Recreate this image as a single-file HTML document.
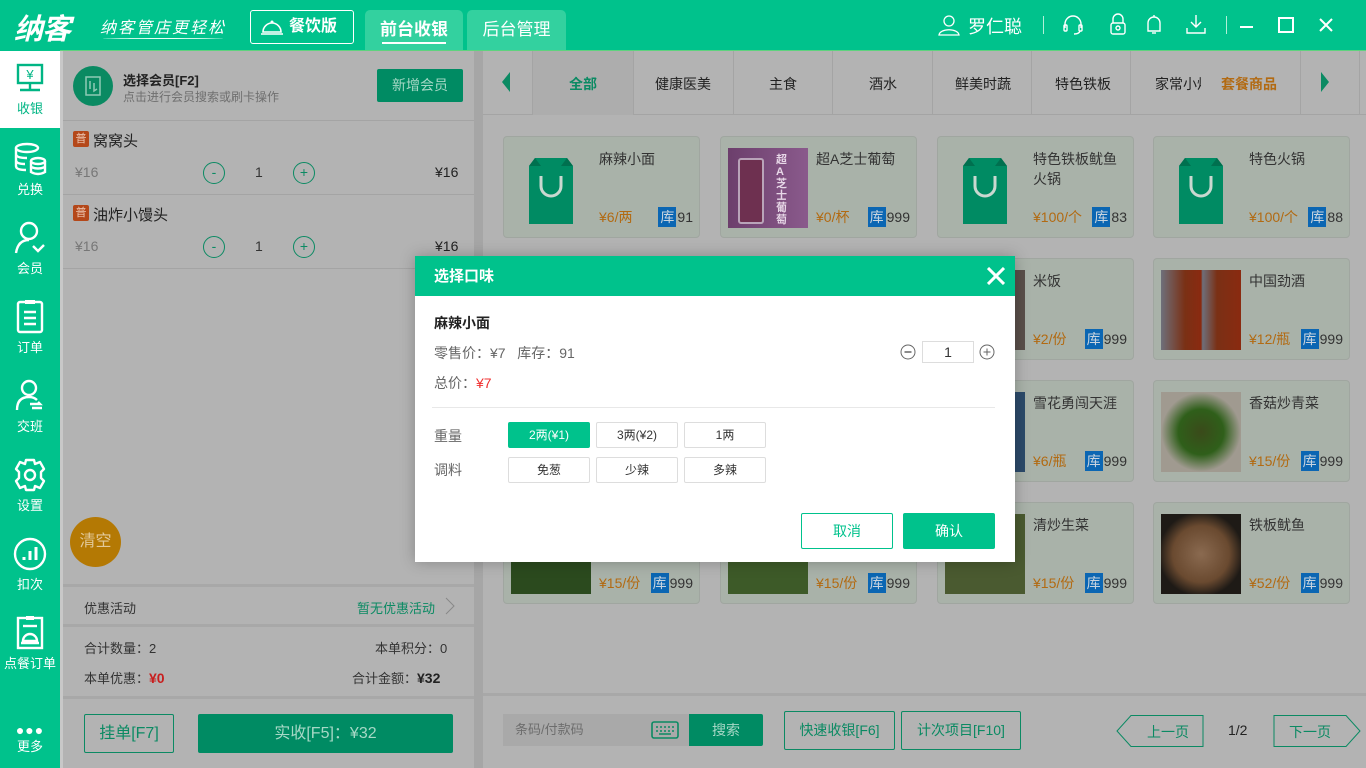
<!DOCTYPE html>
<html><head><meta charset="utf-8">
<style>
*{margin:0;padding:0;box-sizing:border-box}
body{width:1366px;height:768px;overflow:hidden;position:relative;background:#b3b3b3;font-family:"Liberation Sans","Noto Sans CJK SC",sans-serif;font-size:14px;color:#333}
.a{position:absolute}
.hdr{left:0;top:0;width:1366px;height:50px;background:#00c28c}
.side{left:0;top:50px;width:60px;height:718px;background:#00c28c}
.si{position:absolute;left:0;width:60px;text-align:center;color:#fff;font-size:13px}
.si svg{display:block;margin:0 auto 2px}
.card{position:absolute;width:197px;height:102px;background:#a9b2a9;border:1px solid #a0a6a0;border-radius:4px}
.card .im{position:absolute;left:7px;top:11px;width:80px;height:80px}
.card .nm{position:absolute;left:95px;top:12px;font-size:14px;color:#333;line-height:20px;width:96px}
.card .pr{position:absolute;left:95px;bottom:10px;color:#b26a12;font-size:14px}
.card .st{position:absolute;right:6px;bottom:10px;font-size:14px;color:#333}
.card .st b{display:inline-block;background:#0b66b3;color:#c9d4df;font-weight:normal;padding:0 2px;margin-right:1px;height:20px;line-height:20px}
.gbtn{position:absolute;border:1px solid #0b8a63;color:#0b8a63;border-radius:2px;text-align:center}
.opt{position:absolute;width:82px;height:26px;border:1px solid #ddd;border-radius:2px;text-align:center;line-height:24px;font-size:12px;color:#333;background:#fff}
</style></head><body>

<!-- header -->
<div class="a hdr"></div>
<div class="a" style="left:14px;top:6px;color:#fff;font-size:29px;font-weight:bold;font-style:italic;letter-spacing:-1px">纳客</div>
<div class="a" style="left:100px;top:14px;color:#fff;font-size:16px;font-style:italic;letter-spacing:2px">纳客管店更轻松</div>
<div class="a" style="left:103px;top:38px;width:120px;height:2px;border-top:1px solid #e8fff5;border-radius:50%"></div>
<div class="a" style="left:250px;top:10px;width:104px;height:34px;border:1px solid #fff;border-radius:3px;color:#fff;font-size:16px;font-weight:bold;line-height:32px;padding-left:38px">餐饮版</div>
<svg class="a" style="left:259px;top:17px" width="26" height="20" viewBox="0 0 26 20"><path d="M4 15 A9 9 0 0 1 22 15 Z" fill="none" stroke="#fff" stroke-width="1.6"/><line x1="2" y1="17" x2="24" y2="17" stroke="#fff" stroke-width="1.6"/><circle cx="13" cy="5" r="1.5" fill="#fff"/></svg>
<div class="a" style="left:365px;top:10px;width:98px;height:40px;background:#33d19f;border-radius:5px 5px 0 0;color:#fff;font-size:17px;font-weight:bold;text-align:center;line-height:40px">前台收银</div>
<div class="a" style="left:382px;top:42px;width:64px;height:2px;background:#fff"></div>
<div class="a" style="left:467px;top:10px;width:99px;height:40px;background:#33d19f;border-radius:5px 5px 0 0;color:#fff;font-size:17px;text-align:center;line-height:40px">后台管理</div>
<svg class="a" style="left:938px;top:14px" width="22" height="22" viewBox="0 0 22 22" fill="none" stroke="#fff" stroke-width="1.3"><circle cx="11" cy="7" r="5"/><path d="M1 21 C2 14 20 14 21 21 Z"/></svg>
<div class="a" style="left:968px;top:13px;color:#fff;font-size:18px">罗仁聪</div>
<div class="a" style="left:1043px;top:16px;width:1px;height:18px;background:#b0f0d8"></div>
<svg class="a" style="left:1062px;top:14px" width="22" height="22" viewBox="0 0 22 22" fill="none" stroke="#fff" stroke-width="1.4"><path d="M3 14 V10 A8 8 0 0 1 19 10 V14"/><rect x="2" y="11" width="3" height="6" rx="1"/><rect x="17" y="11" width="3" height="6" rx="1"/><path d="M18 17 Q17 20 12 20"/></svg>
<svg class="a" style="left:1109px;top:13px" width="18" height="22" viewBox="0 0 18 22" fill="none" stroke="#fff" stroke-width="1.4"><path d="M4 10 V6 A5 5 0 0 1 14 6 V10"/><rect x="2" y="10" width="14" height="11" rx="2"/><circle cx="9" cy="15" r="2"/></svg>
<svg class="a" style="left:1145px;top:13px" width="18" height="23" viewBox="0 0 18 23" fill="none" stroke="#fff" stroke-width="1.4"><path d="M3 18 V10 A6 6 0 0 1 15 10 V18 Z"/><line x1="9" y1="2" x2="9" y2="4"/><path d="M7 20 h4"/></svg>
<svg class="a" style="left:1185px;top:13px" width="22" height="22" viewBox="0 0 22 22" fill="none" stroke="#fff" stroke-width="1.4"><path d="M11 2 V14 M6 9 L11 14 L16 9"/><path d="M2 15 V20 H20 V15"/></svg>
<div class="a" style="left:1226px;top:16px;width:1px;height:18px;background:#b0f0d8"></div>
<div class="a" style="left:1240px;top:26px;width:13px;height:2px;background:#fff"></div>
<div class="a" style="left:1278px;top:17px;width:16px;height:16px;border:2px solid #fff"></div>
<svg class="a" style="left:1319px;top:18px" width="14" height="14" viewBox="0 0 14 14" stroke="#fff" stroke-width="2"><path d="M1 1 L13 13 M13 1 L1 13"/></svg>
<div class="a" style="left:0;top:50px;width:1366px;height:1px;background:#5fd37e"></div>

<!-- sidebar -->
<div class="a side"></div>
<div class="a" style="left:0;top:51px;width:60px;height:77px;background:#fff"></div>
<div class="si" style="top:62px;color:#00b584"><svg width="36" height="34" viewBox="0 0 36 34" fill="none" stroke="#00b584" stroke-width="2.4"><rect x="6" y="3" width="24" height="18"/><path d="M18 21 V28 M8 28 H28"/><text x="18" y="17" font-size="13" fill="#00b584" stroke="none" text-anchor="middle" font-family="Liberation Sans">¥</text></svg>收银</div>
<div class="si" style="top:141px"><svg width="36" height="36" viewBox="0 0 36 36" fill="none" stroke="#fff" stroke-width="2.4"><ellipse cx="15" cy="7" rx="11" ry="4"/><path d="M4 7 V25 Q4 29 14 29 M4 13 Q4 17 15 17 M4 19 Q4 23 13 23"/><ellipse cx="26" cy="20" rx="7" ry="3"/><path d="M19 20 V31 Q26 35 33 31 V20 M19 26 Q26 29 33 26"/></svg>兑换</div>
<div class="si" style="top:220px"><svg width="36" height="36" viewBox="0 0 36 36" fill="none" stroke="#fff" stroke-width="2.4"><circle cx="17" cy="11" r="8"/><path d="M4 33 Q6 20 17 20"/><path d="M21 26 L26 31 L32 25"/></svg>会员</div>
<div class="si" style="top:299px"><svg width="36" height="36" viewBox="0 0 36 36" fill="none" stroke="#fff" stroke-width="2.4"><rect x="6" y="3" width="24" height="30" rx="2"/><path d="M13 3 H23" stroke-width="4"/><path d="M12 13 H24 M12 19 H24 M12 25 H24"/></svg>订单</div>
<div class="si" style="top:378px"><svg width="36" height="36" viewBox="0 0 36 36" fill="none" stroke="#fff" stroke-width="2.4"><circle cx="17" cy="10" r="7"/><path d="M5 32 Q5 19 17 19 Q22 19 25 22"/><path d="M18 26 H28 L26 24 M20 30 H30"/></svg>交班</div>
<div class="si" style="top:457px"><svg width="36" height="36" viewBox="0 0 36 36" fill="none" stroke="#fff" stroke-width="2.4"><path d="M14 3 H22 L23 7 L28 5 L32 12 L29 15 V21 L32 24 L28 31 L23 29 L22 33 H14 L13 29 L8 31 L4 24 L7 21 V15 L4 12 L8 5 L13 7 Z" stroke-linejoin="round"/><circle cx="18" cy="18" r="5"/></svg>设置</div>
<div class="si" style="top:536px"><svg width="36" height="36" viewBox="0 0 36 36" fill="none" stroke="#fff" stroke-width="2.4"><circle cx="18" cy="18" r="15"/><path d="M12 24 V21 M18 24 V15 M24 24 V11" stroke-width="3"/></svg>扣次</div>
<div class="si" style="top:615px"><svg width="36" height="36" viewBox="0 0 36 36" fill="none" stroke="#fff" stroke-width="2.4"><rect x="6" y="3" width="24" height="30"/><path d="M14 3 H22" stroke-width="4"/><path d="M11 11 H25"/><path d="M11 26 A7 7 0 0 1 25 26 Z M9 28 H27"/></svg><span style="margin-left:-4px;margin-right:-4px">点餐订单</span></div>
<div class="si" style="top:724px"><div style="font-size:14px;letter-spacing:1px;line-height:12px;font-weight:bold">●●●</div>更多</div>
<div class="a" style="left:60px;top:51px;width:3px;height:717px;background:#c8c8c8"></div>

<!-- left panel -->
<div class="a" style="left:63px;top:51px;width:411px;height:717px;background:#b3b3b3"></div>
<div class="a" style="left:73px;top:66px;width:40px;height:40px;border-radius:50%;background:#0a8a62"></div>
<svg class="a" style="left:84px;top:75px" width="18" height="22" viewBox="0 0 18 22" fill="none" stroke="#8fc9b4" stroke-width="1.5"><rect x="2" y="2" width="14" height="18"/><path d="M6 6 V14 M10 8 V16 L13 14"/></svg>
<div class="a" style="left:123px;top:70px;font-size:13px;font-weight:bold;color:#222">选择会员[F2]</div>
<div class="a" style="left:123px;top:88px;font-size:12px;color:#6f6f6f">点击进行会员搜索或刷卡操作</div>
<div class="a" style="left:377px;top:69px;width:86px;height:33px;background:#008b63;border-radius:2px;color:#a6d8c6;text-align:center;line-height:33px;font-size:14px">新增会员</div>
<div class="a" style="left:63px;top:120px;width:411px;height:1px;background:#a4a4a4"></div>

<div class="a" style="left:73px;top:131px;width:16px;height:16px;background:#b4481a;color:#eec9b5;font-size:11px;text-align:center;line-height:16px;border-radius:2px">普</div>
<div class="a" style="left:93px;top:130px;font-size:15px;color:#222">窝窝头</div>
<div class="a" style="left:75px;top:164px;font-size:14px;color:#777">¥16</div>
<div class="a" style="left:203px;top:162px;width:22px;height:22px;border:1px solid #0b8a63;border-radius:50%;text-align:center;line-height:19px;color:#0b8a63">-</div>
<div class="a" style="left:255px;top:164px;color:#333">1</div>
<div class="a" style="left:293px;top:162px;width:22px;height:22px;border:1px solid #0b8a63;border-radius:50%;text-align:center;line-height:19px;color:#0b8a63">+</div>
<div class="a" style="left:435px;top:164px;color:#222">¥16</div>
<div class="a" style="left:63px;top:194px;width:411px;height:1px;background:#a4a4a4"></div>
<div class="a" style="left:73px;top:205px;width:16px;height:16px;background:#b4481a;color:#eec9b5;font-size:11px;text-align:center;line-height:16px;border-radius:2px">普</div>
<div class="a" style="left:93px;top:204px;font-size:15px;color:#222">油炸小馒头</div>
<div class="a" style="left:75px;top:238px;font-size:14px;color:#777">¥16</div>
<div class="a" style="left:203px;top:236px;width:22px;height:22px;border:1px solid #0b8a63;border-radius:50%;text-align:center;line-height:19px;color:#0b8a63">-</div>
<div class="a" style="left:255px;top:238px;color:#333">1</div>
<div class="a" style="left:293px;top:236px;width:22px;height:22px;border:1px solid #0b8a63;border-radius:50%;text-align:center;line-height:19px;color:#0b8a63">+</div>
<div class="a" style="left:435px;top:238px;color:#222">¥16</div>
<div class="a" style="left:63px;top:268px;width:411px;height:1px;background:#a4a4a4"></div>

<div class="a" style="left:70px;top:517px;width:51px;height:50px;border-radius:50%;background:#b47904;color:#e2c99a;font-size:16px;text-align:center;line-height:50px">清空</div>
<div class="a" style="left:63px;top:584px;width:411px;height:3px;background:#a8a8a8"></div>
<div class="a" style="left:84px;top:598px;font-size:13px;color:#333">优惠活动</div>
<div class="a" style="left:357px;top:598px;font-size:13px;color:#0b8a63">暂无优惠活动</div>
<svg class="a" style="left:444px;top:597px" width="12" height="18" viewBox="0 0 12 18" fill="none" stroke="#888" stroke-width="1"><path d="M2 1 L10 9 L2 17"/></svg>
<div class="a" style="left:63px;top:624px;width:411px;height:3px;background:#a8a8a8"></div>
<div class="a" style="left:84px;top:638px;font-size:13px;color:#333">合计数量：2</div>
<div class="a" style="left:375px;top:638px;font-size:13px;color:#333">本单积分：0</div>
<div class="a" style="left:84px;top:668px;font-size:13px;color:#333">本单优惠：<b style="color:#c81e1e;font-size:14px">¥0</b></div>
<div class="a" style="left:352px;top:668px;font-size:13px;color:#333">合计金额：<b style="color:#222;font-size:14px">¥32</b></div>
<div class="a" style="left:63px;top:696px;width:411px;height:3px;background:#a8a8a8"></div>
<div class="gbtn" style="left:84px;top:714px;width:90px;height:39px;line-height:37px;font-size:16px">挂单[F7]</div>
<div class="a" style="left:198px;top:714px;width:255px;height:39px;background:#008b63;border-radius:2px;color:#a6d8c6;text-align:center;line-height:39px;font-size:16px">实收[F5]：¥32</div>

<div class="a" style="left:474px;top:51px;width:9px;height:717px;background:#a6a6a6"></div>

<!-- right panel -->
<div class="a" style="left:483px;top:51px;width:883px;height:64px;background:#b3b3b3;border-bottom:1px solid #a4a4a4"></div>
<svg class="a" style="left:500px;top:72px" width="12" height="20" viewBox="0 0 12 20"><path d="M10 0 L2 10 L10 20 Z" fill="#0b8a63"/></svg>
<div class="a" style="left:532px;top:51px;width:1px;height:64px;background:#a4a4a4"></div>
<div class="a" style="left:533px;top:51px;width:100px;height:64px;background:#adadad"></div>
<div class="a" style="left:569px;top:74px;font-size:14px;font-weight:bold;color:#0b8a63">全部</div>
<div class="a" style="left:633px;top:51px;width:1px;height:64px;background:#a4a4a4"></div>
<div class="a" style="left:655px;top:74px;font-size:14px;color:#222">健康医美</div>
<div class="a" style="left:733px;top:51px;width:1px;height:64px;background:#a4a4a4"></div>
<div class="a" style="left:769px;top:74px;font-size:14px;color:#222">主食</div>
<div class="a" style="left:832px;top:51px;width:1px;height:64px;background:#a4a4a4"></div>
<div class="a" style="left:869px;top:74px;font-size:14px;color:#222">酒水</div>
<div class="a" style="left:932px;top:51px;width:1px;height:64px;background:#a4a4a4"></div>
<div class="a" style="left:955px;top:74px;font-size:14px;color:#222">鲜美时蔬</div>
<div class="a" style="left:1031px;top:51px;width:1px;height:64px;background:#a4a4a4"></div>
<div class="a" style="left:1055px;top:74px;font-size:14px;color:#222">特色铁板</div>
<div class="a" style="left:1130px;top:51px;width:1px;height:64px;background:#a4a4a4"></div>
<div class="a" style="left:1155px;top:74px;font-size:14px;color:#222;width:46px;overflow:hidden;white-space:nowrap">家常小炒</div>
<div class="a" style="left:1221px;top:74px;font-size:14px;font-weight:bold;color:#b26a12">套餐商品</div>
<div class="a" style="left:1300px;top:51px;width:1px;height:64px;background:#a4a4a4"></div>
<svg class="a" style="left:1319px;top:72px" width="12" height="20" viewBox="0 0 12 20"><path d="M2 0 L10 10 L2 20 Z" fill="#0b8a63"/></svg>
<div class="a" style="left:1359px;top:51px;width:1px;height:64px;background:#a4a4a4"></div>

<!-- cards -->
<svg width="0" height="0" style="position:absolute"><defs><g id="bag"><path d="M10 12 L16 4 H48 L54 12 V70 H10 Z" fill="#008b63"/><path d="M16 4 L22 12 H10 Z M48 4 L42 12 H54 Z" fill="#00704f"/><path d="M22 22 V32 A10 10 0 0 0 42 32 V22" fill="none" stroke="#c9d8d0" stroke-width="3"/></g></defs></svg>

<div class="card" style="left:503px;top:136px"><svg class="im" viewBox="0 0 80 80"><use href="#bag" x="8" y="6"/></svg><div class="nm">麻辣小面</div><div class="pr">¥6/两</div><div class="st"><b>库</b>91</div></div>
<div class="card" style="left:720px;top:136px"><div class="im" style="background:linear-gradient(90deg,#6c3f6c,#8a5a8c)"><div style="position:absolute;left:10px;top:10px;width:26px;height:66px;background:#6e3050;border-radius:3px;border:2px solid #b9a4b9"></div><div style="position:absolute;left:48px;top:6px;color:#e7d7e7;font-size:11px;font-weight:bold;width:14px;line-height:12px">超A芝士葡萄</div></div><div class="nm">超A芝士葡萄</div><div class="pr">¥0/杯</div><div class="st"><b>库</b>999</div></div>
<div class="card" style="left:937px;top:136px"><svg class="im" viewBox="0 0 80 80"><use href="#bag" x="8" y="6"/></svg><div class="nm">特色铁板鱿鱼火锅</div><div class="pr">¥100/个</div><div class="st"><b>库</b>83</div></div>
<div class="card" style="left:1153px;top:136px"><svg class="im" viewBox="0 0 80 80"><use href="#bag" x="8" y="6"/></svg><div class="nm">特色火锅</div><div class="pr">¥100/个</div><div class="st"><b>库</b>88</div></div>

<div class="card" style="left:503px;top:258px"></div>
<div class="card" style="left:720px;top:258px"></div>
<div class="card" style="left:937px;top:258px"><div class="im" style="background:#5a4f4a"></div><div class="nm">米饭</div><div class="pr">¥2/份</div><div class="st"><b>库</b>999</div></div>
<div class="card" style="left:1153px;top:258px"><div class="im" style="background:linear-gradient(90deg,#6e6f7a,#7a3015 30%,#8a2a10 50%,#6e6f7a 52%,#7a3015 70%,#8a2a10)"></div><div class="nm">中国劲酒</div><div class="pr">¥12/瓶</div><div class="st"><b>库</b>999</div></div>

<div class="card" style="left:503px;top:380px"></div>
<div class="card" style="left:720px;top:380px"></div>
<div class="card" style="left:937px;top:380px"><div class="im" style="background:#2c4a6a"></div><div class="nm">雪花勇闯天涯</div><div class="pr">¥6/瓶</div><div class="st"><b>库</b>999</div></div>
<div class="card" style="left:1153px;top:380px"><div class="im" style="background:radial-gradient(circle,#3a4a1a 0,#2f5f1a 40%,#a09a90 70%)"></div><div class="nm">香菇炒青菜</div><div class="pr">¥15/份</div><div class="st"><b>库</b>999</div></div>

<div class="card" style="left:503px;top:502px"><div class="im" style="background:#2b4a1e"></div><div class="pr">¥15/份</div><div class="st"><b>库</b>999</div></div>
<div class="card" style="left:720px;top:502px"><div class="im" style="background:#3d5a28"></div><div class="pr">¥15/份</div><div class="st"><b>库</b>999</div></div>
<div class="card" style="left:937px;top:502px"><div class="im" style="background:#4a5a30"></div><div class="nm">清炒生菜</div><div class="pr">¥15/份</div><div class="st"><b>库</b>999</div></div>
<div class="card" style="left:1153px;top:502px"><div class="im" style="background:radial-gradient(circle,#8a6a50 0,#6a4a30 50%,#1e1a16 75%)"></div><div class="nm">铁板鱿鱼</div><div class="pr">¥52/份</div><div class="st"><b>库</b>999</div></div>

<!-- bottom bar -->
<div class="a" style="left:483px;top:693px;width:883px;height:3px;background:#a8a8a8"></div>
<div class="a" style="left:503px;top:714px;width:186px;height:32px;background:#a9a9a9;padding-left:12px;line-height:32px;font-size:13px;color:#6d6d6d">条码/付款码</div>
<svg class="a" style="left:651px;top:721px" width="28" height="18" viewBox="0 0 28 18" fill="none" stroke="#0b8a63" stroke-width="1.6"><rect x="1" y="1" width="26" height="16" rx="2"/><path d="M5 6 h2 M9 6 h2 M13 6 h2 M17 6 h2 M21 6 h2 M5 10 h2 M9 10 h2 M13 10 h2 M17 10 h2 M21 10 h2 M8 13 h12"/></svg>
<div class="a" style="left:689px;top:714px;width:74px;height:32px;background:#008b63;color:#a6d8c6;text-align:center;line-height:32px;font-size:14px;border-radius:0 2px 2px 0">搜索</div>
<div class="gbtn" style="left:784px;top:711px;width:111px;height:39px;line-height:37px;font-size:14px">快速收银[F6]</div>
<div class="gbtn" style="left:901px;top:711px;width:120px;height:39px;line-height:37px;font-size:14px">计次项目[F10]</div>
<svg class="a" style="left:1116px;top:715px" width="89" height="32" viewBox="0 0 89 32" fill="none" stroke="#0b8a63" stroke-width="1"><path d="M15 0.5 H87 V31.5 H15 L1 16 Z"/></svg>
<div class="a" style="left:1147px;top:722px;color:#0b8a63;font-size:14px">上一页</div>
<div class="a" style="left:1228px;top:722px;color:#222;font-size:14px">1/2</div>
<svg class="a" style="left:1273px;top:715px" width="89" height="32" viewBox="0 0 89 32" fill="none" stroke="#0b8a63" stroke-width="1"><path d="M1 0.5 H73 L87 16 L73 31.5 H1 Z"/></svg>
<div class="a" style="left:1289px;top:722px;color:#0b8a63;font-size:14px">下一页</div>

<!-- dialog -->
<div class="a" style="left:415px;top:256px;width:600px;height:306px;background:#fff;box-shadow:0 0 14px rgba(0,0,0,.25)"></div>
<div class="a" style="left:415px;top:256px;width:600px;height:40px;background:#00c28c"></div>
<div class="a" style="left:434px;top:265px;color:#fff;font-size:15px;font-weight:bold">选择口味</div>
<svg class="a" style="left:987px;top:267px" width="18" height="18" viewBox="0 0 18 18" stroke="#fff" stroke-width="3"><path d="M1 1 L17 17 M17 1 L1 17"/></svg>
<div class="a" style="left:434px;top:313px;font-size:14px;font-weight:bold;color:#222">麻辣小面</div>
<div class="a" style="left:434px;top:343px;font-size:14px;color:#666">零售价：¥7&nbsp;&nbsp;&nbsp;库存：91</div>
<div class="a" style="left:434px;top:373px;font-size:14px;color:#666">总价：<span style="color:#f03030">¥7</span></div>
<svg class="a" style="left:900px;top:344px" width="16" height="16" viewBox="0 0 16 16" fill="none" stroke="#666" stroke-width="1"><circle cx="8" cy="8" r="7"/><path d="M4.5 8 H11.5" stroke-width="1.5"/></svg>
<div class="a" style="left:922px;top:341px;width:52px;height:22px;border:1px solid #ddd;text-align:center;line-height:20px;font-size:14px;color:#333">1</div>
<svg class="a" style="left:979px;top:344px" width="16" height="16" viewBox="0 0 16 16" fill="none" stroke="#666" stroke-width="1"><circle cx="8" cy="8" r="7"/><path d="M4.5 8 H11.5 M8 4.5 V11.5"/></svg>
<div class="a" style="left:432px;top:407px;width:563px;height:1px;background:#e8e8e8"></div>
<div class="a" style="left:434px;top:426px;font-size:14px;color:#666">重量</div>
<div class="a" style="left:434px;top:460px;font-size:14px;color:#666">调料</div>
<div class="opt" style="left:508px;top:422px;background:#00c28c;border-color:#00c28c;color:#fff">2两(¥1)</div>
<div class="opt" style="left:596px;top:422px">3两(¥2)</div>
<div class="opt" style="left:684px;top:422px">1两</div>
<div class="opt" style="left:508px;top:457px">免葱</div>
<div class="opt" style="left:596px;top:457px">少辣</div>
<div class="opt" style="left:684px;top:457px">多辣</div>
<div class="a" style="left:801px;top:513px;width:92px;height:36px;border:1px solid #00c28c;border-radius:2px;color:#00c28c;text-align:center;line-height:34px;font-size:14px">取消</div>
<div class="a" style="left:903px;top:513px;width:92px;height:36px;background:#00c28c;border-radius:2px;color:#fff;text-align:center;line-height:36px;font-size:14px">确认</div>
</body></html>
